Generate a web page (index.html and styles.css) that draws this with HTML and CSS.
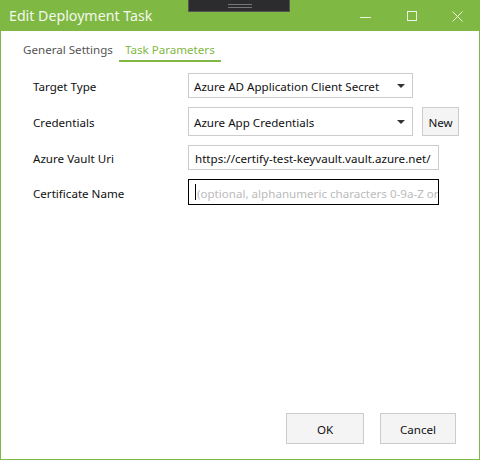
FILE: index.html
```html
<!DOCTYPE html>
<html>
<head>
<meta charset="utf-8">
<link rel="stylesheet" href="styles.css">
</head>
<body>
<div class="window">
  <div class="titlebar">
    <div class="title">Edit Deployment Task</div>
    <div class="handle"><span class="grip"></span></div>
    <div class="controls">
      <span class="ctl"><svg width="14" height="14" viewBox="0 0 14 14"><line x1="2" y1="7.5" x2="13" y2="7.5" stroke="#eef6e4" stroke-width="1"/></svg></span>
      <span class="ctl"><svg width="14" height="14" viewBox="0 0 14 14"><rect x="3.5" y="2.5" width="9" height="9" fill="none" stroke="#eef6e4" stroke-width="1"/></svg></span>
      <span class="ctl"><svg width="14" height="14" viewBox="0 0 14 14"><path d="M2.5 2.5 L12.5 12.5 M12.5 2.5 L2.5 12.5" stroke="#eef6e4" stroke-width="1"/></svg></span>
    </div>
  </div>
  <div class="body">
    <div class="tabs">
      <div class="tab">General Settings</div>
      <div class="tab active">Task Parameters</div>
    </div>
    <div class="form">
      <div class="label">Target Type</div>
      <div class="field"><div class="combo w224"><span>Azure AD Application Client Secret</span><i class="arrow"></i></div></div>
      <div class="label">Credentials</div>
      <div class="field"><div class="combo w224 tall"><span>Azure App Credentials</span><i class="arrow"></i></div><div class="btn new">New</div></div>
      <div class="label">Azure Vault Uri</div>
      <div class="field"><div class="text">https://certify-test-keyvault.vault.azure.net/</div></div>
      <div class="label">Certificate Name</div>
      <div class="field"><div class="text focus"><span class="caret"></span><span class="ph">(optional, alphanumeric characters 0-9a-Z or</span></div></div>
    </div>
    <div class="footer">
      <div class="btn ok">OK</div>
      <div class="btn cancel">Cancel</div>
    </div>
  </div>
</div>
</body>
</html>
```
FILE: styles.css
```css
html, body { margin: 0; padding: 0; }
body { width: 480px; height: 460px; overflow: hidden; font-family: "Noto Sans", "Open Sans", sans-serif; font-size: 11.6px; color: #111; }
.window { width: 480px; height: 460px; box-sizing: border-box; display: flex; flex-direction: column; background: #7fb843; }
.titlebar { height: 31px; display: flex; align-items: center; position: relative; color: #f4f9ee; }
.title { font-size: 14.2px; padding-left: 9px; margin-top: 0; }
.handle { position: absolute; left: 188px; top: 0; width: 102px; height: 12px; background: #2c2c2e; border: 1px solid #555; border-top: none; box-sizing: border-box; display: flex; justify-content: center; }
.grip { width: 24px; height: 2px; border-top: 1px solid #777; border-bottom: 1px solid #777; margin-top: 4px; margin-left: 2px; }
.controls { margin-left: auto; display: flex; height: 31px; }
.ctl { width: 46px; display: flex; align-items: center; justify-content: center; }
.ctl:first-child svg { margin-top: 2px; }
.body { flex: 1; background: #fff; margin: 0 1px 1px 1px; display: flex; flex-direction: column; }
.tabs { display: flex; padding-left: 16px; margin-top: 8px; height: 23px; }
.tab { padding: 1px 6px 0; color: #555; line-height: 20px; box-sizing: border-box; height: 23px; }
.tab.active { color: #80b843; border-bottom: 2px solid #80b843; }
.form { display: grid; grid-template-columns: 155px auto; row-gap: 9px; padding-left: 32px; margin-top: 11px; align-items: center; }
.label { color: #111; padding-top: 2px; }
.field { display: flex; align-items: stretch; gap: 9px; }
.combo { height: 25px; border: 1px solid #ccc; box-sizing: border-box; display: flex; align-items: center; padding-left: 5px; padding-right: 6px; background: #fff; padding-top: 2px; }
.combo.tall { height: 29px; }
.w224 { width: 225px; }
.combo span { flex: 1; }
.arrow { width: 0; height: 0; border-left: 4px solid transparent; border-right: 4px solid transparent; border-top: 4px solid #333; margin-right: 1px; margin-top: -2px; }
.btn { background: #f4f4f4; border: 1px solid #ccc; box-sizing: border-box; display: flex; align-items: center; justify-content: center; padding-top: 1px; }
.new { width: 37px; height: 29px; }
.text { width: 251px; height: 25px; border: 1px solid #ccc; box-sizing: border-box; display: flex; align-items: center; padding-left: 6px; white-space: nowrap; overflow: hidden; padding-top: 2px; }
.text.focus { border: 1px solid #000; height: 26px; padding-left: 6px; }
.caret { width: 1px; height: 16px; background: #000; margin-right: 1px; margin-top: -2px; flex: none; }
.ph { color: #bbb; }
.footer { margin-top: auto; display: flex; justify-content: flex-end; gap: 16px; padding-right: 23px; padding-bottom: 15px; }
.ok { width: 78px; height: 31px; }
.cancel { width: 76px; height: 31px; }
```
